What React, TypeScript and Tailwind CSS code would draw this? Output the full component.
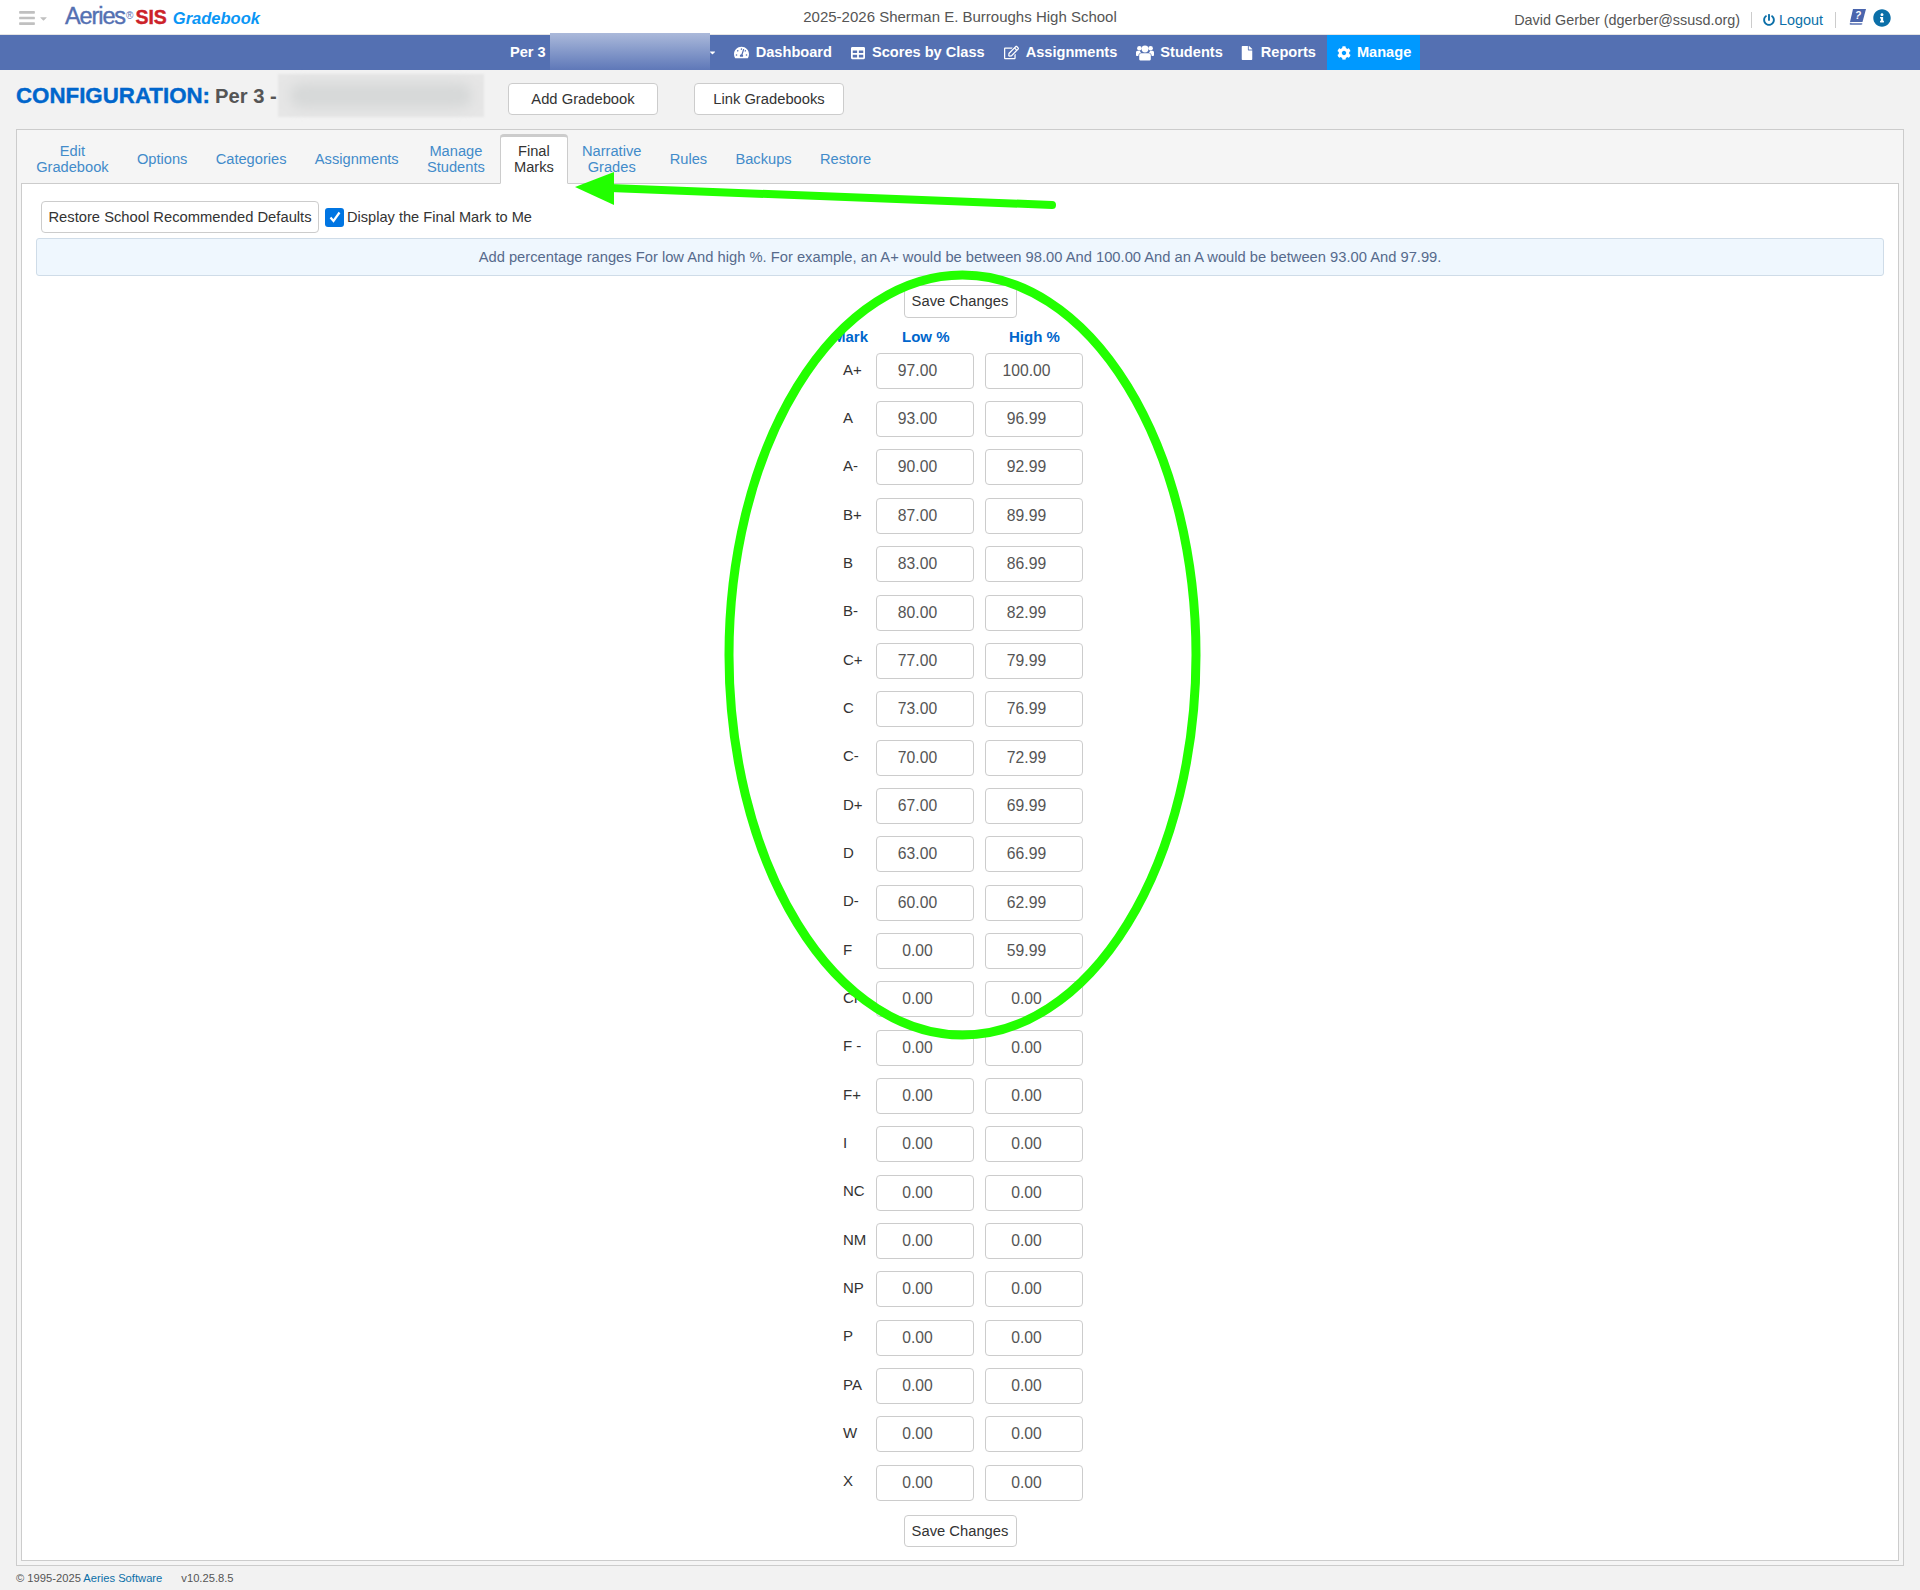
import {
  FaBars,
  FaCaretDown,
  FaCog,
  FaFile,
  FaInfoCircle,
  FaPowerOff,
  FaRegEdit,
  FaTable,
  FaTachometerAlt,
} from 'react-icons/fa';

const marks = [
  ['A+', '97.00', '100.00'],
  ['A', '93.00', '96.99'],
  ['A-', '90.00', '92.99'],
  ['B+', '87.00', '89.99'],
  ['B', '83.00', '86.99'],
  ['B-', '80.00', '82.99'],
  ['C+', '77.00', '79.99'],
  ['C', '73.00', '76.99'],
  ['C-', '70.00', '72.99'],
  ['D+', '67.00', '69.99'],
  ['D', '63.00', '66.99'],
  ['D-', '60.00', '62.99'],
  ['F', '0.00', '59.99'],
  ['CR', '0.00', '0.00'],
  ['F -', '0.00', '0.00'],
  ['F+', '0.00', '0.00'],
  ['I', '0.00', '0.00'],
  ['NC', '0.00', '0.00'],
  ['NM', '0.00', '0.00'],
  ['NP', '0.00', '0.00'],
  ['P', '0.00', '0.00'],
  ['PA', '0.00', '0.00'],
  ['W', '0.00', '0.00'],
  ['X', '0.00', '0.00'],
];

const tabs = [
  { label: ['Edit', 'Gradebook'] },
  { label: ['Options'] },
  { label: ['Categories'] },
  { label: ['Assignments'] },
  { label: ['Manage', 'Students'] },
  { label: ['Final', 'Marks'], active: true },
  { label: ['Narrative', 'Grades'] },
  { label: ['Rules'] },
  { label: ['Backups'] },
  { label: ['Restore'] },
];

// three person group, closer to the older FontAwesome glyph than the package one
const UsersIcon = () => (
  <svg width="18" height="16" viewBox="0 0 18 16" fill="currentColor">
    <circle cx="9" cy="4" r="3.4" />
    <circle cx="3.4" cy="3.2" r="2.3" />
    <circle cx="14.6" cy="3.2" r="2.3" />
    <path d="M5 8.2h8c1.2 0 1.8 1 1.8 2.4V14c0 1-.8 1.6-1.8 1.6H5c-1 0-1.8-.6-1.8-1.6v-3.4C3.200 9.200 3.800 8.200 5 8.200z" />
    <path d="M0 7.600C0 6.500.6 5.800 1.600 5.800h2.300c.3 1 .9 1.500 1.300 1.800-1.600.4-2.700 1.500-2.900 3.400H1C.4 11 0 10.500 0 10z" />
    <path d="M18 7.600c0-1.100-.6-1.800-1.600-1.800h-2.300c-.3 1-.9 1.500-1.300 1.800 1.600.4 2.700 1.500 2.900 3.400H17c.6 0 1-.5 1-1z" />
  </svg>
);

const navItems = [
  { label: 'Dashboard', icon: <FaTachometerAlt size={15} />, iconClass: 'mr-[7px]' },
  { label: 'Scores by Class', icon: <FaTable size={14} />, iconClass: 'mr-[7px]' },
  { label: 'Assignments', icon: <FaRegEdit size={15} />, iconClass: 'mr-[7px]' },
  { label: 'Students', icon: <UsersIcon />, iconClass: 'mr-[6px]' },
  { label: 'Reports', icon: <FaFile size={14} />, iconClass: 'ml-[-2px] mr-[7px]' },
];

const Button = ({ children, className }: { children: string; className: string }) => (
  <button
    type="button"
    className={`bg-white border border-[#ccc] rounded-[4px] text-[#333] text-[14.75px] text-center ${className}`}
  >
    {children}
  </button>
);

const MarkInput = ({ value }: { value: string }) => (
  <input
    readOnly
    value={value}
    className="w-[98px] h-[36px] bg-white border border-[#ccc] rounded-[4px] pr-[15px] text-center text-[15.7px] text-[#555] outline-none"
  />
);

export default function App() {
  return (
    <div className="relative h-[1590px] overflow-hidden bg-[#f2f2f2] font-['Liberation_Sans',Arial,sans-serif] text-[#333]">
      {/* Top bar */}
      <header className="h-[35px] bg-white flex items-center border-b border-[#e4e4e4]">
        <div className="flex items-center w-[640px] pt-[2px]">
          <span className="flex items-center text-[#c0c0c0] ml-[18px]">
            <FaBars size={18} />
            <FaCaretDown size={11} className="ml-[2px]" />
          </span>
          <span className="ml-[16px] text-[23.5px] leading-none tracking-[-1.1px] text-[#5470b2] [-webkit-text-stroke:0.4px_#5470b2] pb-[2px]">
            Aeries<sup className="ml-[1px] text-[10px] tracking-normal [-webkit-text-stroke:0]">®</sup>
          </span>
          <span className="ml-[2px] text-[19.5px] leading-none font-bold text-[#cc2229] [-webkit-text-stroke:0.4px_#cc2229]">SIS</span>
          <span className="ml-[6px] text-[16.5px] leading-none font-bold italic text-[#0a96f5]">Gradebook</span>
        </div>
        <div className="w-[640px] text-center text-[15px] text-[#555] pt-[1px]">
          2025-2026 Sherman E. Burroughs High School
        </div>
        <div className="flex-1 flex items-center justify-end pr-[29px] pt-[7px] text-[14.4px] text-[#555]">
          <span>David Gerber (dgerber@ssusd.org)</span>
          <span className="w-px h-[16px] bg-[#ccc] mx-[11px]" />
          <span className="flex items-center text-[#0b6fa8]">
            <FaPowerOff size={12} className="mr-[4px]" />
            Logout
          </span>
          <span className="w-px h-[16px] bg-[#ccc] mx-[12px]" />
          <svg width="19" height="20" viewBox="0 0 19 18" className="mt-[-6px]">
            <path d="M5 1h13l-3.500 13H2z" fill="#4a65ad" />
            <path d="M2 14.500c-1 2 0 2.500 1 2.500h11l.6-2H4z" fill="#4a65ad" stroke="#fff" strokeWidth="0.6" />
            <text x="7" y="11" fontSize="10" fontWeight="700" fontStyle="italic" fill="#fff">?</text>
          </svg>
          <FaInfoCircle size={18} className="ml-[6px] mt-[-4px] text-[#0b6fa8]" />
        </div>
      </header>

      {/* Nav */}
      <nav className="relative h-[35px] bg-[#5470b2] flex items-center pl-[510px] text-white text-[14.6px] font-bold">
        <span>Per 3</span>
        <FaCaretDown size={9} className="ml-[162px] mr-[17px]" />
        {navItems.map((item) => (
          <span key={item.label} className="flex items-center h-full pr-[19px]">
            <span className={`flex items-center ${item.iconClass}`}>{item.icon}</span>
            {item.label}
          </span>
        ))}
        <span className="flex items-center h-full bg-[#0099ff] pl-[10px] pr-[9px] ml-[-8px]">
          <FaCog size={14} className="mr-[6px]" />
          Manage
        </span>
        <div className="absolute left-[550px] top-[-2px] w-[160px] h-[37px] bg-gradient-to-b from-[#abb9da] to-[#5f78b8]" />
      </nav>

      {/* Title row */}
      <div className="relative h-[59px] flex items-center pl-[16px] pb-[1px]">
        <h1 className="text-[22.300px] leading-none font-bold text-[#0066cc] [-webkit-text-stroke:0.4px_#0066cc] pb-[6px]">CONFIGURATION:</h1>
        <span className="ml-[5px] text-[20.200px] leading-none font-bold text-[#555] pb-[6px]">Per 3 -</span>
        <div className="absolute left-[278px] top-[4px] w-[206px] h-[43px] bg-[#e6e6e6] blur-[1px]">
          <div className="mx-[12px] mt-[9px] h-[25px] rounded-full bg-[#d6d8d8] blur-[6px]" />
        </div>
        <Button className="absolute left-[508px] top-[13px] w-[150px] h-[32px]">Add Gradebook</Button>
        <Button className="absolute left-[694px] top-[13px] w-[150px] h-[32px]">Link Gradebooks</Button>
      </div>

      {/* Panel */}
      <main className="mx-[16px] h-[1437px] border border-[#ccc] bg-[#f5f5f5] px-[4px] pb-[4px] flex flex-col">
        <ul className="h-[53px] flex items-end pl-[1px] text-[14.66px] leading-[16px] text-[#428bca]">
          {tabs.map((tab) => (
            <li
              key={tab.label[0]}
              className={
                tab.active
                  ? 'relative h-[50px] mb-[-1px] px-[13px] ml-[1px] flex flex-col justify-center items-center bg-white border border-[#ccc] border-b-white border-t-[3px] rounded-t-[4px] text-[#333] pb-[3px]'
                  : 'h-[49px] px-[14.13px] flex flex-col justify-center items-center'
              }
            >
              {tab.label.map((line) => (
                <span key={line}>{line}</span>
              ))}
            </li>
          ))}
        </ul>

        <section className="flex-1 bg-white border border-[#ccc] flex flex-col">
          <div className="flex items-center mt-[17px] ml-[19px]">
            <Button className="w-[278px] h-[32px]">Restore School Recommended Defaults</Button>
            <span className="ml-[6px] w-[19px] h-[19px] bg-[#0075e2] rounded-[3px] flex items-center justify-center">
              <svg width="14" height="14" viewBox="0 0 14 14">
                <path d="M2.500 7.500l3 3.500 6-8.500" fill="none" stroke="#fff" strokeWidth="2.200" />
              </svg>
            </span>
            <span className="ml-[3px] pt-[2px] text-[14.6px]">Display the Final Mark to Me</span>
          </div>

          <div className="mt-[5px] mx-[14px] h-[38px] flex items-center justify-center bg-[#eff7fe] border border-[#cfdce8] rounded-[3px] text-[14.73px] text-[#566a8c]">
            Add percentage ranges For low And high %. For example, an A+ would be between 98.00 And 100.00 And an A would be between 93.00 And 97.99.
          </div>

          <Button className="self-center w-[113px] h-[33px] mt-[9px]">Save Changes</Button>

          <div className="self-center ml-[6px] w-[240px] mt-[10px]">
            <div className="flex h-[24.800px] text-[15px] leading-[18px] font-bold text-[#0066cc]">
              <span className="w-[33px] ml-[-10px] mr-[10px]">Mark</span>
              <span className="w-[98px] pl-[26px]">Low %</span>
              <span className="w-[98px] ml-[11px] pl-[24px]">High %</span>
            </div>
            {marks.map(([mark, low, high]) => (
              <div key={mark} className="flex items-start h-[48.35px]">
                <span className="w-[33px] h-[36px] flex items-center text-[15px] text-[#333] pb-[2px]">{mark}</span>
                <MarkInput value={low} />
                <span className="w-[11px]" />
                <MarkInput value={high} />
              </div>
            ))}
          </div>

          <Button className="self-center w-[113px] h-[32px] mt-[2px]">Save Changes</Button>
        </section>
      </main>

      {/* Footer */}
      <footer className="ml-[16px] mt-[4px] text-[11.2px] text-[#555]">
        © 1995-2025 <span className="text-[#0b6fa8]">Aeries Software</span>
        <span className="ml-[19px]">v10.25.8.5</span>
      </footer>

      {/* Green annotations drawn over the screenshot */}
      <svg width="1920" height="1590" viewBox="0 0 1920 1590" className="absolute left-0 top-0 pointer-events-none">
        <ellipse cx="962.5" cy="655" rx="233.5" ry="380" fill="none" stroke="#22ff00" strokeWidth="9" />
        <path d="M610 188L1052 205" stroke="#22ff00" strokeWidth="8" strokeLinecap="round" />
        <path d="M575 187L614 172L614 205Z" fill="#22ff00" />
      </svg>
    </div>
  );
}
